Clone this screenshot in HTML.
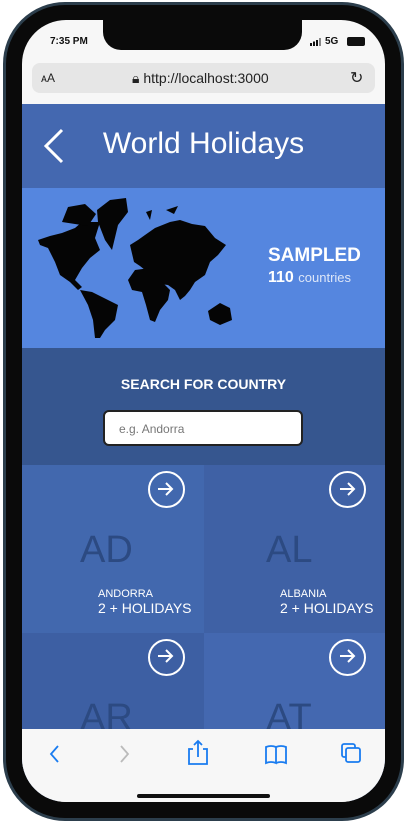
<!DOCTYPE html>
<html><head><meta charset="utf-8"><style>
*{margin:0;padding:0;box-sizing:border-box}
body{width:407px;height:823px;background:#fff;position:relative;overflow:hidden;font-family:"Liberation Sans",sans-serif}
.frame{position:absolute;left:3px;top:2px;width:401px;height:819px;border-radius:62px;background:#0a0a0a;border:3px solid #2c3e4c}
.screen{position:absolute;left:22px;top:20px;width:363px;height:782px;border-radius:44px;background:#f7f7f7;overflow:hidden}
.notch{position:absolute;left:81px;top:0;width:199px;height:30px;background:#0a0a0a;border-radius:0 0 18px 18px}
.abs{position:absolute}
.tile{position:absolute;width:182px;height:168px;color:#fff}
.tile .code{position:absolute;left:58px;top:64px;font-size:38px;color:#2c4a82}
.tile .arr{position:absolute;right:19px;top:6px;width:37px;height:37px;border:2px solid #fff;border-radius:50%}
.tile .n{position:absolute;left:76px;top:123px;font-size:11px}
.tile .h{position:absolute;left:76px;top:135px;font-size:14px}
</style></head><body>
<div class="frame"></div>
<div class="screen">
 <div class="notch"></div>
 <div class="abs" style="left:28px;top:16px;font-size:10px;font-weight:bold;color:#111">7:35 PM</div>
 <svg class="abs" style="left:288px;top:18px" width="12" height="8" fill="#111"><rect x="0" y="5" width="2" height="3"/><rect x="3" y="3.5" width="2" height="4.5"/><rect x="6" y="2" width="2" height="6"/><rect x="9" y="0" width="2" height="8" fill="#888"/></svg>
 <div class="abs" style="left:303px;top:16px;font-size:10px;font-weight:bold;color:#111">5G</div>
 <div class="abs" style="left:325px;top:17px;width:18px;height:9px;background:#111;border-radius:2px"></div>
 <div class="abs" style="left:10px;top:43px;width:343px;height:30px;background:#e6e6e6;border-radius:8px"></div>
 <div class="abs" style="left:19px;top:51px;font-size:12px;color:#222">ᴀA</div>
 <div class="abs" style="left:110px;top:50px;font-size:14px;color:#222">🔒︎ http://localhost:3000</div>
 <div class="abs" style="left:328px;top:48px;font-size:16px;color:#222">↻</div>
 <div class="abs" style="left:0;top:84px;width:363px;height:84px;background:#4468b0"></div>
 <svg class="abs" style="left:20px;top:108px" width="24" height="36"><path d="M20 2 L4 18 L20 34" stroke="#fff" stroke-width="3" fill="none"/></svg>
 <div class="abs" style="left:0;top:107px;width:363px;text-align:center;font-size:30px;color:#fff">World Holidays</div>
 <div class="abs" style="left:0;top:168px;width:363px;height:160px;background:#5586df"></div>
 <svg class="abs" style="left:-22px;top:-20px" width="407" height="823" fill="#050505">
  <polygon points="38,240 50,236 62,233 75,228 82,222 100,222 95,238 100,250 90,258 82,268 75,280 82,287 78,290 70,282 60,275 55,262 48,248 40,245"/>
  <polygon points="62,222 68,207 85,204 96,214 88,226"/>
  <polygon points="97,210 110,200 126,198 128,212 118,225 112,250 105,240 98,222"/>
  <polygon points="80,290 92,292 108,300 118,305 115,320 105,330 100,338 95,338 93,320 88,305"/>
  <polygon points="134,262 130,245 138,240 145,235 155,228 170,222 180,220 192,224 205,226 215,238 226,245 218,255 210,262 205,275 195,282 190,290 185,296 180,300 175,290 168,285 160,284 152,275 145,270 140,266"/>
  <polygon points="128,280 135,270 150,268 160,280 170,290 168,300 160,310 155,322 150,320 146,305 142,292 132,290"/>
  <polygon points="208,311 220,303 230,308 232,320 220,325 210,320"/>
  <polygon points="146,212 152,210 150,220"/><polygon points="166,210 178,206 174,214"/>
 </svg>
 <div class="abs" style="left:246px;top:225px;font-size:19px;font-weight:bold;color:#fff">SAMPLED</div>
 <div class="abs" style="left:246px;top:249px;font-size:16px;font-weight:bold;color:#fff">110 <span style="font-size:13px;font-weight:normal;color:#dde6f8">countries</span></div>
 <div class="abs" style="left:0;top:328px;width:363px;height:117px;background:#36568f"></div>
 <div class="abs" style="left:0;top:356px;width:363px;text-align:center;font-size:14px;font-weight:bold;color:#fff">SEARCH FOR COUNTRY</div>
 <div class="abs" style="left:81px;top:390px;width:200px;height:36px;background:#fff;border:2px solid #222;border-radius:6px;font-size:12px;color:#777;padding:10px 0 0 14px">e.g. Andorra</div>
 <div class="tile" style="left:0;top:445px;background:#4268ae"><div class="arr"></div><div class="code">AD</div><div class="n">ANDORRA</div><div class="h">2 + HOLIDAYS</div></div>
 <div class="tile" style="left:182px;top:445px;width:181px;background:#3f61a5"><div class="arr"></div><div class="code" style="left:62px">AL</div><div class="n">ALBANIA</div><div class="h">2 + HOLIDAYS</div></div>
 <div class="tile" style="left:0;top:613px;background:#3d5fa3"><div class="arr"></div><div class="code">AR</div></div>
 <div class="tile" style="left:182px;top:613px;width:181px;background:#4468b0"><div class="arr"></div><div class="code" style="left:62px">AT</div></div>
 <svg class="abs" style="left:-22px;top:-20px" width="407" height="823" fill="none" stroke="#fff" stroke-width="2">
  <path d="M158 489 h13 M166 483 l6 6 -6 6"/><path d="M340 489 h13 M348 483 l6 6 -6 6"/>
  <path d="M158 656 h13 M166 650 l6 6 -6 6"/><path d="M340 656 h13 M348 650 l6 6 -6 6"/>
 </svg>
 <div class="abs" style="left:0;top:709px;width:363px;height:73px;background:#f7f7f7"></div>
 <svg class="abs" style="left:-22px;top:-20px" width="407" height="823" fill="none" stroke-width="1.8">
  <path d="M58 746 l-7 8 7 8" stroke="#1a7cf0"/>
  <path d="M121 746 l7 8 -7 8" stroke="#bbb"/>
  <path d="M193 749 h-4 v15 h18 v-15 h-4 M198 757 v-15 M194 745 l4 -4 4 4" stroke="#1a7cf0"/>
  <path d="M266 747 q5 -2 10 0 v16 q-5 -2 -10 0 z M276 747 q5 -2 10 0 v16 q-5 -2 -10 0" stroke="#1a7cf0"/>
  <rect x="342" y="744" width="13" height="13" rx="2" stroke="#1a7cf0"/>
  <rect x="346" y="748" width="14" height="14" rx="2" stroke="#1a7cf0" fill="#f7f7f7"/>
 </svg>
 <div class="abs" style="left:115px;top:774px;width:133px;height:4px;border-radius:2px;background:#111"></div>
</div>
</body></html>
